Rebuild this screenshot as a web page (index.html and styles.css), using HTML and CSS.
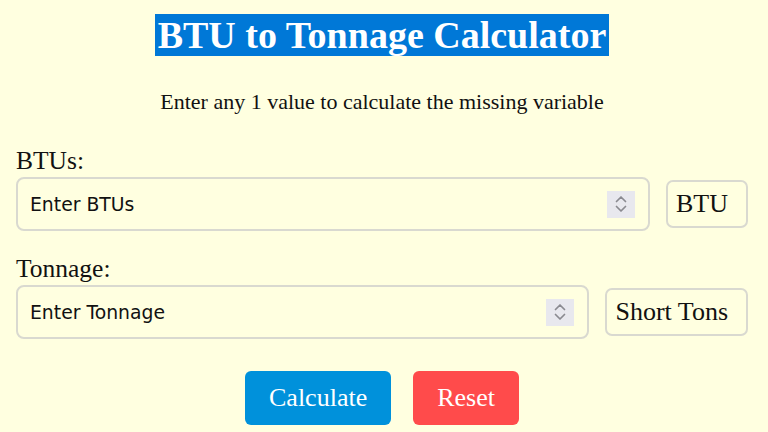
FILE: index.html
```html
<!DOCTYPE html>
<html>
<head>
<meta charset="utf-8">
<link rel="stylesheet" href="styles.css">
</head>
<body>
<main class="calc">
  <h1 class="title"><span class="title-hl">BTU to Tonnage Calculator</span></h1>
  <p class="subtitle">Enter any 1 value to calculate the missing variable</p>

  <div class="field field-first">
    <label class="label">BTUs:</label>
    <div class="row">
      <div class="input-box">
        <input class="input" type="text" placeholder="Enter BTUs">
        <span class="spinner"><svg width="14" height="24" viewBox="0 0 14 24"><path d="M2.5 9.5 L7 5 L11.5 9.5" fill="none" stroke="#8a8a90" stroke-width="1.7" stroke-linecap="round" stroke-linejoin="round"/><path d="M2.5 14.5 L7 19 L11.5 14.5" fill="none" stroke="#8a8a90" stroke-width="1.7" stroke-linecap="round" stroke-linejoin="round"/></svg></span>
      </div>
      <div class="unit">BTU</div>
    </div>
  </div>

  <div class="field field-second">
    <label class="label">Tonnage:</label>
    <div class="row">
      <div class="input-box">
        <input class="input" type="text" placeholder="Enter Tonnage">
        <span class="spinner"><svg width="14" height="24" viewBox="0 0 14 24"><path d="M2.5 9.5 L7 5 L11.5 9.5" fill="none" stroke="#8a8a90" stroke-width="1.7" stroke-linecap="round" stroke-linejoin="round"/><path d="M2.5 14.5 L7 19 L11.5 14.5" fill="none" stroke="#8a8a90" stroke-width="1.7" stroke-linecap="round" stroke-linejoin="round"/></svg></span>
      </div>
      <div class="unit">Short Tons</div>
    </div>
  </div>

  <div class="buttons">
    <button class="btn btn-calc">Calculate</button>
    <button class="btn btn-reset">Reset</button>
  </div>
</main>
</body>
</html>
```
FILE: styles.css
```css
html, body {
  margin: 0;
  padding: 0;
  background: #FFFFE0;
}
body {
  font-family: "Liberation Serif", "Times New Roman", serif;
  color: #111;
}
.calc {
  padding: 0 20px 0 16px;
}
.title {
  margin: 0;
  padding-top: 14px;
  text-align: center;
  font-size: 38px;
  font-weight: bold;
  line-height: 42px;
}
.title-hl {
  background: #0078D7;
  color: #fff;
  padding: 0 3px;
}
.subtitle {
  margin: 33px 0 0;
  text-align: center;
  font-size: 22px;
  line-height: 26px;
}
.field-first {
  margin-top: 32px;
}
.field-second {
  margin-top: 24px;
}
.label {
  display: block;
  font-size: 25.5px;
  line-height: 28px;
  margin-bottom: 2px;
}
.row {
  display: flex;
  align-items: center;
  gap: 16px;
}
.input-box {
  flex: 1;
  height: 50px;
  border: 2px solid #d9d9d0;
  border-radius: 8px;
  display: flex;
  align-items: center;
  padding: 0 13px 0 12px;
}
.input {
  flex: 1;
  min-width: 0;
  border: none;
  background: transparent;
  outline: none;
  font-family: "DejaVu Sans", Verdana, sans-serif;
  font-size: 18.8px;
  padding: 0;
  color: #111;
}
.input::placeholder {
  color: #111;
  opacity: 1;
}
.spinner {
  width: 28px;
  height: 27px;
  background: #e8e8ee;
  display: flex;
  align-items: center;
  justify-content: center;
}
.unit {
  height: 44px;
  border: 2px solid #d9d9d0;
  border-radius: 7px;
  display: flex;
  align-items: center;
  padding: 0 18px 0 8px;
  font-size: 26px;
}
.buttons {
  display: flex;
  justify-content: center;
  gap: 22px;
  margin-top: 32px;
}
.btn {
  height: 54px;
  border: none;
  border-radius: 6px;
  color: #fff;
  font-family: "Liberation Serif", "Times New Roman", serif;
  font-size: 26px;
  padding: 0 24px;
}
.btn-calc {
  background: #0091DB;
}
.btn-reset {
  background: #FF4B4B;
}
```
